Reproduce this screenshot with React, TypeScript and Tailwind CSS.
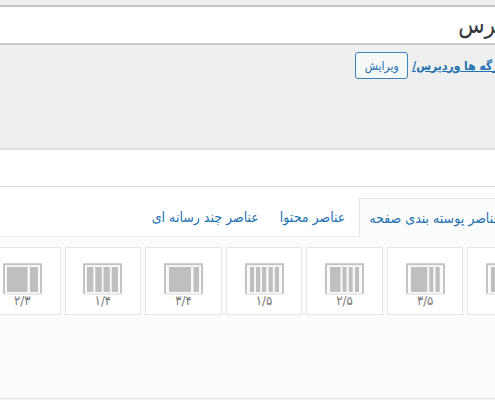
type Bar = [x: number, width: number];

const layouts: { label: string; bars: Bar[] }[] = [
  { label: "۴/۵", bars: [[5, 22.5], [29.5, 4.5]] },
  { label: "۳/۵", bars: [[5, 16.3], [23.3, 4], [29.5, 4.2]] },
  { label: "۲/۵", bars: [[5, 10.5], [17.5, 4], [23.7, 4], [30, 4]] },
  { label: "۱/۵", bars: [[5, 4.2], [11, 4.2], [17, 4.2], [23.6, 4.2], [29.7, 4.3]] },
  { label: "۳/۴", bars: [[5, 22], [29.5, 5.5]] },
  { label: "۱/۴", bars: [[4, 6.3], [12.3, 6.5], [20.5, 6.3], [28.7, 6.3]] },
  { label: "۲/۳", bars: [[4, 20.5], [27, 8]] },
];

const tabs = ["عناصر پوسته بندی صفحه", "عناصر محتوا", "عناصر چند رسانه ای"];

function ColumnsIcon({ bars }: { bars: Bar[] }) {
  return (
    <svg width="39" height="32" viewBox="0 0 39 32" className="shrink-0" aria-hidden="true">
      <rect x="0" y="29.5" width="39" height="2.5" fill="#ececec" />
      <path d="M1 30.5V1.2H38V30.5" fill="none" stroke="#c3c3c3" strokeWidth="2" />
      <rect x="3" y="3" width="33" height="27" fill="#f9f9f9" />
      {bars.map(([x, width]) => (
        <rect key={x} x={x} y="4" width={width} height="25" fill="#bfbfbf" />
      ))}
    </svg>
  );
}

export default function App() {
  return (
    <div
      dir="rtl"
      className="overflow-hidden bg-[#efefef] font-['DejaVu_Sans_Condensed','DejaVu_Sans',sans-serif] text-[#2271b1]"
    >
      <main className="-mr-[50px]">
        <header className="h-[148px] pt-[5px]">
          <input
            type="text"
            aria-label="عنوان"
            defaultValue="وردپرس"
            className="block h-10 w-full border-y-2 border-t-[#c5c5cb] border-b-[#c9cbc9] bg-white pr-3 text-[24px] leading-8 text-[#32373c] outline-none"
          />
          <div className="flex items-center gap-1 pt-[7px] pr-[42px]">
            <a href="#" className="text-[12px] font-bold whitespace-nowrap underline">
              برگه ها وردپرس/
            </a>
            <button
              type="button"
              className="h-[27px] w-[53px] rounded-[3px] border border-[#3c83bb] bg-[#f6f7f7] text-[12px]"
            >
              ویرایش
            </button>
          </div>
        </header>

        <section className="border-t-2 border-[#e0e0e0] bg-white">
          <div className="h-[37px] border-b border-[#dcdcdc]" />
          <div role="tablist" className="flex h-[50px] border-b border-[#ebebeb] pt-[11px] pr-[34px] text-[14px]">
            {tabs.map((tab, index) => (
              <button
                key={tab}
                type="button"
                role="tab"
                aria-selected={index === 0}
                className={
                  index === 0
                    ? "-mb-px h-[39px] border border-b-0 border-[#e5e5e5] bg-[#fcfcfc] px-[9px] whitespace-nowrap"
                    : "h-[38px] pr-[14px] pl-[7px] whitespace-nowrap"
                }
              >
                {tab}
              </button>
            ))}
          </div>
          <div className="h-[162px] border-b border-[#e2e2e2] bg-[#fcfcfc] pt-[10px] pr-px">
            <div className="grid w-[560px] grid-cols-7 gap-1">
              {layouts.map(({ label, bars }) => (
                <button
                  key={label}
                  type="button"
                  className="flex h-[68px] flex-col items-center border border-[#e5e5e5] bg-white pt-[15px] text-[13px] leading-3 text-[#777]"
                >
                  <ColumnsIcon bars={bars} />
                  {label}
                </button>
              ))}
            </div>
          </div>
          <div className="h-px bg-[#f7f7f7]" />
        </section>
      </main>
    </div>
  );
}
